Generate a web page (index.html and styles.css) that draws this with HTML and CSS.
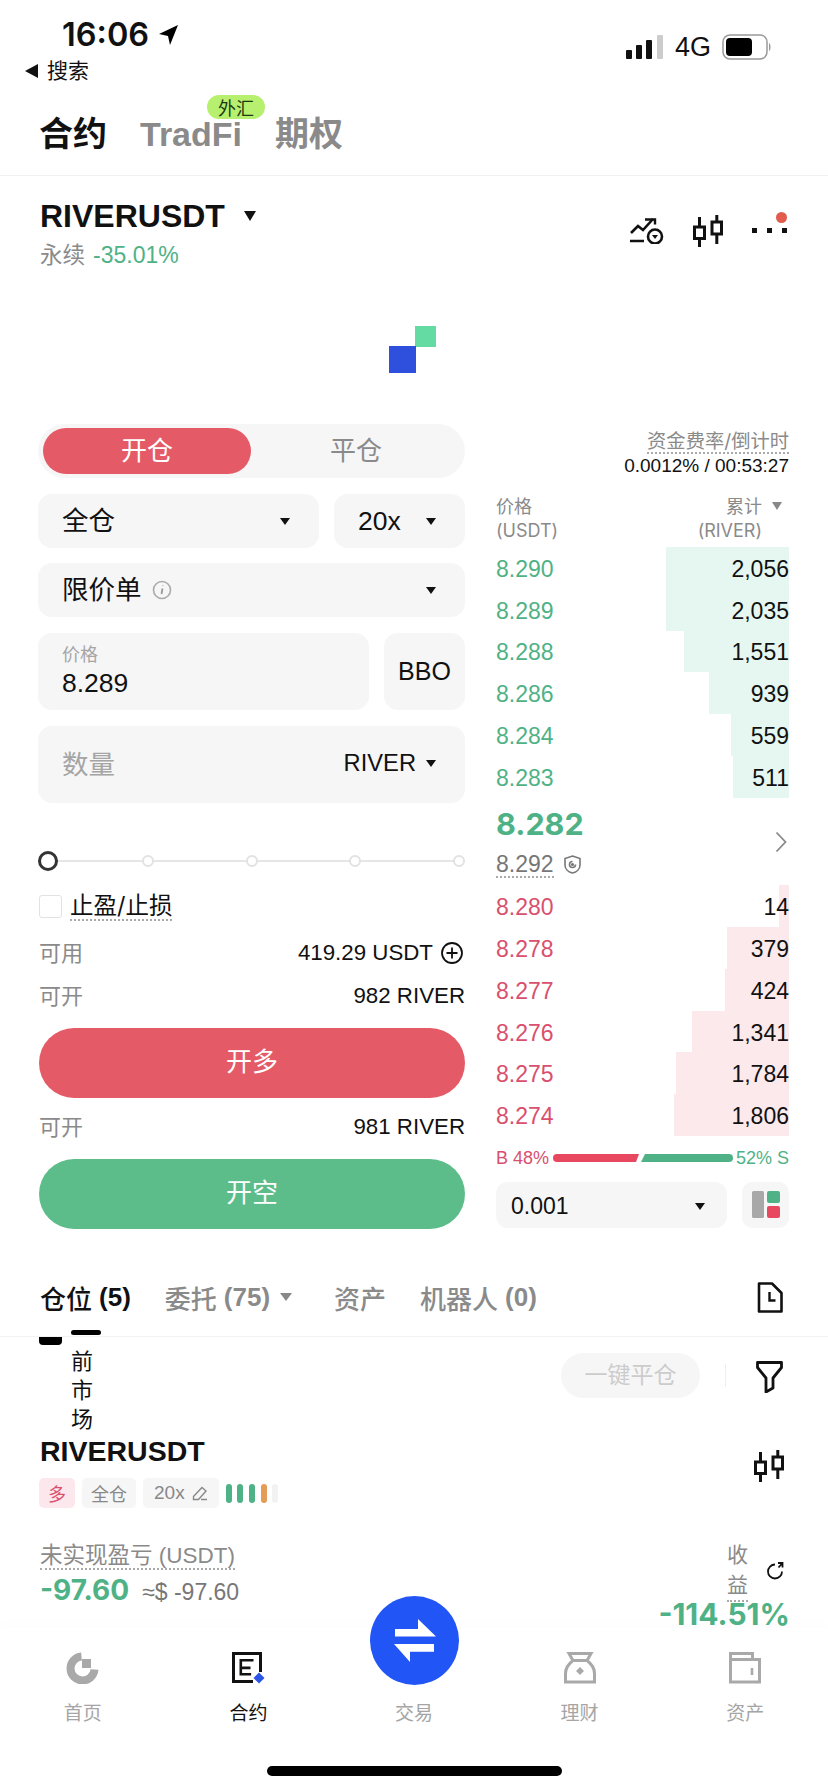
FILE: index.html
```html
<!DOCTYPE html>
<html lang="zh-CN">
<head>
	<meta charset="UTF-8">
	<title>合约</title>
	<link rel="stylesheet" href="styles.css">
</head>
<body>
<div class="phone">
	<div class="status">
		<div class="status-left">
			<div class="clock">16:06
				<svg class="loc" width="21" height="22" viewBox="0 0 21 22"><path d="M20 1 12 21l-2-9-9-2z" fill="#000"/></svg>
			</div>
			<div class="back"><span class="back-arrow"></span>搜索</div>
		</div>
		<div class="status-right">
			<svg width="38" height="24" viewBox="0 0 38 24"><rect x="0" y="15" width="6" height="9" rx="1" fill="#111"/><rect x="10" y="10" width="6" height="14" rx="1" fill="#111"/><rect x="20" y="5" width="6" height="19" rx="1" fill="#111"/><rect x="31" y="0" width="6" height="24" rx="1" fill="#ccc"/></svg>
			<span class="net">4G</span>
			<svg width="50" height="26" viewBox="0 0 50 26"><rect x="1" y="1" width="44" height="24" rx="7" fill="none" stroke="#999" stroke-width="1.5"/><rect x="4" y="4" width="26" height="18" rx="4" fill="#000"/><path d="M47 9c2 1 2 7 0 8z" fill="#999"/></svg>
		</div>
	</div>

	<div class="market-tabs">
		<span class="market-tab on">合约</span>
		<span class="market-tab tradfi">TradFi<span class="fx-badge">外汇</span></span>
		<span class="market-tab">期权</span>
	</div>

	<div class="ticker">
		<div>
			<div class="symbol">RIVERUSDT<i class="tri tri-lg"></i></div>
			<div class="sub"><span class="grey">永续</span><span class="green sub-chg">-35.01%</span></div>
		</div>
		<div class="ticker-icons">
			<svg width="34" height="26" viewBox="0 0 34 26" fill="none" stroke="#111" stroke-width="2.600"><path d="M0 23h14M1 15l7-7 5 4 10-11"/><path d="M15 1.500h10v5" stroke-width="2.400"/><circle cx="25" cy="18.500" r="7"/><path d="M22 17h6l-3 4z" fill="#111" stroke="none"/></svg>
			<svg class="candle" width="30" height="32" viewBox="0 0 30 32" fill="none" stroke="#111" stroke-width="3"><rect x="1.500" y="12" width="10" height="11.500"/><path d="M6.500 2v10M6.500 23.500V32"/><rect x="19" y="7" width="9.500" height="12"/><path d="M23.800 0v7M23.800 19v10"/></svg>
			<div class="more"><i></i><i></i><i></i><b class="red-dot"></b></div>
		</div>
	</div>

	<div class="chart-load">
		<div class="logo"><i class="logo-g"></i><i class="logo-b"></i></div>
	</div>

	<div class="trade">
		<div class="form">
			<div class="toggle"><span class="toggle-on">开仓</span><span class="toggle-off">平仓</span></div>
			<div class="row-2">
				<div class="field sel grow"><span class="up">全仓</span><i class="tri"></i></div>
				<div class="field sel lever"><span>20x</span><i class="tri"></i></div>
			</div>
			<div class="field sel order-field"><span class="order-type">限价单<svg width="20" height="20" viewBox="0 0 20 20"><circle cx="10" cy="10" r="8.500" fill="none" stroke="#aaa" stroke-width="1.600"/><path d="M10.500 8.500 9.500 14M10.800 5.600v.5" stroke="#999" stroke-width="1.800" fill="none"/></svg></span><i class="tri"></i></div>
			<div class="row-2">
				<div class="field price grow"><small>价格</small><span>8.289</span></div>
				<div class="field bbo">BBO</div>
			</div>
			<div class="field qty"><span class="ph up">数量</span><span class="unit">RIVER<i class="tri"></i></span></div>

			<div class="slider"><i class="knob"></i><i class="stop"></i><i class="stop"></i><i class="stop"></i><i class="stop"></i></div>

			<div class="tpsl"><i class="check"></i><span class="dotted">止盈/止损</span></div>
			<div class="kv kv-avail"><span class="up">可用</span><b>419.29 USDT<svg width="22" height="22" viewBox="0 0 22 22" fill="none" stroke="#111" stroke-width="1.800"><circle cx="11" cy="11" r="10"/><path d="M11 5.500v11M5.500 11h11"/></svg></b></div>
			<div class="kv"><span class="up">可开</span><b>982 RIVER</b></div>
			<div class="btn btn-red">开多</div>
			<div class="kv kv-2"><span class="up">可开</span><b>981 RIVER</b></div>
			<div class="btn btn-green">开空</div>
		</div>

		<div class="book">
			<div class="funding">
				<div class="dotted funding-t">资金费率/倒计时</div>
				<div class="funding-v">0.0012% / 00:53:27</div>
			</div>
			<div class="book-head">
				<div>价格<br>(USDT)</div>
				<div class="r">累计<i class="tri tri-grey"></i><br><span class="pr">(RIVER)</span></div>
			</div>
			<div class="book-row ask"><i class="depth" style="width:123px"></i><span>8.290</span><b>2,056</b></div>
			<div class="book-row ask"><i class="depth" style="width:123px"></i><span>8.289</span><b>2,035</b></div>
			<div class="book-row ask"><i class="depth" style="width:105px"></i><span>8.288</span><b>1,551</b></div>
			<div class="book-row ask"><i class="depth" style="width:80px"></i><span>8.286</span><b>939</b></div>
			<div class="book-row ask"><i class="depth" style="width:58px"></i><span>8.284</span><b>559</b></div>
			<div class="book-row ask"><i class="depth" style="width:56px"></i><span>8.283</span><b>511</b></div>
			<div class="mid">
				<div>
					<div class="last">8.282</div>
					<div class="mark"><span class="dotted">8.292</span><svg width="17" height="19" viewBox="0 0 17 19" fill="none" stroke="#777" stroke-width="1.600"><path d="M8.500 1 16 3.500V10c0 4-3.500 7-7.500 8C4.500 17 1 14 1 10V3.500z"/><path d="M11.500 9.500a3 3 0 1 1-3-3"/><circle cx="8.500" cy="9.500" r=".8" fill="#777"/></svg></div>
				</div>
				<svg width="12" height="22" viewBox="0 0 12 22" fill="none" stroke="#888" stroke-width="1.800"><path d="M1.500 1.500 10.500 11l-9 9.500"/></svg>
			</div>
			<div class="book-row bid"><i class="depth" style="width:10px"></i><span>8.280</span><b>14</b></div>
			<div class="book-row bid"><i class="depth" style="width:62px"></i><span>8.278</span><b>379</b></div>
			<div class="book-row bid"><i class="depth" style="width:64px"></i><span>8.277</span><b>424</b></div>
			<div class="book-row bid"><i class="depth" style="width:97px"></i><span>8.276</span><b>1,341</b></div>
			<div class="book-row bid"><i class="depth" style="width:113px"></i><span>8.275</span><b>1,784</b></div>
			<div class="book-row bid"><i class="depth" style="width:115px"></i><span>8.274</span><b>1,806</b></div>
			<div class="ratio">
				<span class="red-t">B 48%</span>
				<svg width="180" height="8" viewBox="0 0 180 8"><path d="M4 0H86L83 8H4a4 4 0 0 1 0-8z" fill="#e8485f"/><path d="M92 0H176a4 4 0 0 1 0 8H88z" fill="#4fb286"/></svg>
				<span class="green">52% S</span>
			</div>
			<div class="book-ctl">
				<div class="depth-sel"><span>0.001</span><i class="tri"></i></div>
				<div class="layout-btn">
					<svg width="28" height="27" viewBox="0 0 28 27"><rect x="0" y="0" width="12" height="27" rx="1.500" fill="#a8a8a8"/><rect x="15" y="0" width="13" height="12" rx="2" fill="#4fb286"/><rect x="15" y="15" width="13" height="12" rx="2" fill="#e8485f"/></svg>
				</div>
			</div>
		</div>
	</div>

	<div class="pos-tabs">
		<span class="pos-tab on">仓位 <b class="num">(5)</b></span>
		<span class="pos-tab has-tri">委托 <b class="num">(75)</b><i class="tri tri-grey"></i></span>
		<span class="pos-tab">资产</span>
		<span class="pos-tab">机器人 <b class="num">(0)</b></span>
		<svg class="pos-tab-icon" width="26" height="31" viewBox="0 0 26 31" fill="none" stroke="#111" stroke-width="2.600"><path d="M2 1.500h13l9.500 9.500v18.500H2z" stroke-linejoin="round"/><path d="M12.500 10v8.500h6" stroke-width="2.400"/></svg>
	</div>

	<div class="pos-body">
		<!-- checkbox row that got squashed under the tab bar -->
		<i class="clip-box"></i><i class="clip-bar"></i>
		<div class="pos-side">
			<svg width="27" height="32" viewBox="0 0 27 32" fill="none" stroke="#111" stroke-width="2.800" stroke-linejoin="round"><path d="M1.500 1.500h24v5L17 17v10l-7 4V17L1.500 6.500z"/></svg>
			<svg width="30" height="32" viewBox="0 0 30 32" fill="none" stroke="#111" stroke-width="3"><rect x="1.500" y="12" width="10" height="11.500"/><path d="M6.500 2v10M6.500 23.500V32"/><rect x="19" y="7" width="9.500" height="12"/><path d="M23.800 0v7M23.800 19v10"/></svg>
		</div>
		<div class="close-all"><span class="close-pill">一键平仓</span><i class="close-sep"></i></div>
		<div class="vert">前<br>市<br>场</div>
		<div class="pos-name">RIVERUSDT</div>
		<div class="tags">
			<span class="tag tag-red">多</span>
			<span class="tag">全仓</span>
			<span class="tag tag-lev">20x<svg width="16" height="16" viewBox="0 0 16 16" fill="none" stroke="#888" stroke-width="1.400"><path d="M1.500 11.500 10 2.500l4 3.500-7.500 8.500h-5zM9 14.500h6"/></svg></span>
			<span class="pills"><i></i><i></i><i></i><i class="o"></i><i class="e"></i></span>
		</div>
		<div class="pnl">
			<div>
				<div class="dotted pnl-t">未实现盈亏 (USDT)</div>
				<div class="pnl-v"><b class="green">-97.60</b><span>≈$ -97.60</span></div>
			</div>
			<div class="roe">
				<div class="roe-t"><span class="dotted">收<br>益</span><svg width="19" height="18" viewBox="0 0 19 18" fill="none" stroke="#111" stroke-width="1.800"><path d="M9 2.500A7 7 0 1 0 16 9.500"/><path d="M12 1h4.500v4.500M16.500 1 12.500 5.500"/></svg></div>
				<b class="green">-114.51%</b>
			</div>
		</div>
	</div>

	<div class="nav">
		<div class="nav-item">
			<svg width="34" height="32" viewBox="0 0 34 32"><path d="M15.500 4.500A12 12 0 1 0 28.500 17.500" fill="none" stroke="#a9a9a9" stroke-width="8"/><rect x="16" y="7" width="9" height="9" fill="#a9a9a9"/></svg>
			<span>首页</span>
		</div>
		<div class="nav-item on">
			<svg width="33" height="32" viewBox="0 0 33 32"><path d="M21 29.500H1.500V1.500h27V20" fill="none" stroke="#111" stroke-width="3"/><path d="M7.500 7h14v2.600h-11.400v5h8.400v2.600h-8.400V21h9v2.600h-11.600z" fill="#111"/><path d="M27 20.500l5.500 5.500-5.500 5.500-5.500-5.500z" fill="#2a55e5"/></svg>
			<span>合约</span>
		</div>
		<div class="nav-item">
			<i class="nav-gap"></i>
			<span>交易</span>
		</div>
		<div class="nav-item">
			<svg width="32" height="32" viewBox="0 0 32 32" fill="none" stroke="#a9a9a9" stroke-width="3"><path d="M5 1.500h22l-4 7c4 3 7.500 8 7.500 13v8.500h-29V21.500c0-5 3.500-10 7.500-13z"/><path d="M9.500 8.500h13"/><path d="M16 15l4 4-4 4-4-4z" fill="#a9a9a9" stroke="none"/></svg>
			<span>理财</span>
		</div>
		<div class="nav-item">
			<svg width="32" height="32" viewBox="0 0 32 32" fill="none" stroke="#a9a9a9" stroke-width="3"><path d="M1.500 30V1.500h22v6h7V30z"/><path d="M1.500 7.500h22"/><path d="M23 16v7" stroke-width="2.600"/></svg>
			<span>资产</span>
		</div>
	</div>
	<div class="swap">
		<svg width="42" height="43" viewBox="0 0 42 43" fill="#fff"><path d="M24 0 42 17.500H1V10H24zM0 25H40V32.700H16V43z"/></svg>
	</div>
	<div class="home-bar"></div>
</div>
</body>
</html>
```
FILE: styles.css
```css
*{
	box-sizing: border-box;
}
body{
	margin: 0;
	background: #fff;
	font-family: Inter, "Noto Sans CJK SC", sans-serif;
	color: #111;
}
i{
	display: block;
	font-style: normal;
}
b{
	font-weight: 400;
}
.phone{
	position: relative;
	width: 828px;
	height: 1792px;
	overflow: hidden;
}
.green{
	color: #4fb286;
}
.red-t{
	color: #d9506e;
}
.grey{
	color: #8a8a8a;
}
.dotted{
	border-bottom: 2px dotted #aaa;
}
/* noto cjk sits a bit low in the line */
.up{
	padding-bottom: 5px;
}
.tri{
	width: 0;
	height: 0;
	border-left: 5px solid transparent;
	border-right: 5px solid transparent;
	border-top: 7px solid #111;
}
.tri-lg{
	border-left-width: 6.500px;
	border-right-width: 6.500px;
	border-top-width: 10px;
}
.tri-grey{
	display: inline-block;
	border-top-color: #888;
	border-left-width: 5.500px;
	border-right-width: 5.500px;
	border-top-width: 8px;
	margin-left: 10px;
	vertical-align: 3px;
}

/* status bar */
.status{
	display: flex;
	justify-content: space-between;
	height: 92px;
	padding: 0 56px 0 25px;
}
.clock{
	display: flex;
	align-items: center;
	gap: 9px;
	padding: 17px 0 0 37px;
	height: 52px;
	font: 600 32.500px Inter, sans-serif;
}
.back{
	display: flex;
	align-items: center;
	gap: 9px;
	margin-top: 8px;
	font-size: 21px;
	line-height: 22px;
}
.back-arrow{
	border-top: 7px solid transparent;
	border-bottom: 7px solid transparent;
	border-right: 13px solid #111;
}
.status-right{
	display: flex;
	align-items: center;
	gap: 11px;
	height: 47px;
	padding-top: 47px;
}
.net{
	font: 27px "Liberation Sans", sans-serif;
}

/* market tabs */
.market-tabs{
	display: flex;
	gap: 33px;
	height: 84px;
	padding: 18px 39px 0;
	border-bottom: 1px solid #f0f0f0;
}
.market-tab{
	position: relative;
	font-size: 34px;
	line-height: 48px;
	font-weight: 700;
	color: #8a8a8a;
}
.market-tab.on{
	color: #111;
}
.tradfi{
	font-family: "Liberation Sans", sans-serif;
	font-size: 34px;
}
.fx-badge{
	position: absolute;
	left: 67px;
	top: -15px;
	width: 58px;
	height: 24px;
	border-radius: 12px;
	background: #b7ef6f;
	color: #1c3a10;
	font: 400 18px/24px "Noto Sans CJK SC", sans-serif;
	text-align: center;
}

/* ticker */
.ticker{
	display: flex;
	justify-content: space-between;
	padding: 22px 40px 0;
	height: 94px;
}
.symbol{
	display: flex;
	align-items: center;
	gap: 19px;
	font: 700 32px/36px "Liberation Sans", sans-serif;
}
.sub{
	display: flex;
	align-items: center;
	gap: 8px;
	margin-top: 8px;
	font-size: 22.500px;
	line-height: 26px;
}
.sub-chg{
	font: 23px/26px "Liberation Sans", sans-serif;
}
.ticker-icons{
	display: flex;
	align-items: flex-start;
	gap: 29px;
	padding-top: 20px;
}
.candle{
	margin-top: -3px;
}
.more{
	position: relative;
	display: flex;
	gap: 10px;
	width: 36px;
	padding-top: 10px;
}
.more i{
	width: 5px;
	height: 5px;
	background: #111;
}
.red-dot{
	position: absolute;
	right: 1px;
	top: -6px;
	width: 11px;
	height: 11px;
	border-radius: 50%;
	background: #e25c4e;
}
.chart-load{
	display: flex;
	justify-content: center;
	height: 154px;
	padding: 56px 3px 0 0;
}
.logo{
	position: relative;
	width: 47px;
	height: 47px;
}
.logo-g{
	position: absolute;
	right: 0;
	top: 0;
	width: 21px;
	height: 21px;
	background: #63dba3;
}
.logo-b{
	position: absolute;
	left: 0;
	bottom: 0;
	width: 27px;
	height: 27px;
	background: #2f50dc;
}

/* trade area */
.trade{
	display: flex;
	gap: 31px;
	padding-left: 38px;
}
.form{
	width: 427px;
}
.toggle{
	display: flex;
	align-items: center;
	height: 54px;
	padding: 0 4px 0 5px;
	border-radius: 27px;
	background: #f6f6f7;
	font-size: 26px;
}
.toggle-on{
	width: 208px;
	height: 46px;
	line-height: 46px;
	border-radius: 23px;
	background: #e55a67;
	color: #fff;
	text-align: center;
}
.toggle-off{
	flex: 1;
	height: 46px;
	line-height: 46px;
	text-align: center;
	color: #8a8a8a;
}
.field{
	height: 54px;
	margin-top: 16px;
	border-radius: 14px;
	background: #f6f6f7;
	font-size: 26.500px;
}
.order-field{
	margin-top: 15px;
}
.sel{
	display: flex;
	align-items: center;
	justify-content: space-between;
	padding: 0 29px 0 24px;
}
.row-2{
	display: flex;
	gap: 15px;
}
.grow{
	flex: 1;
}
.lever{
	width: 131px;
	padding: 0 29px 0 24px;
	font-family: "Liberation Sans", sans-serif;
}
.order-type{
	display: flex;
	align-items: center;
	gap: 10px;
	padding-bottom: 5px;
}
.order-type svg{
	margin-top: 5px;
}
.price{
	height: 77px;
	padding: 11px 24px 0;
}
.price small{
	display: block;
	font-size: 18px;
	line-height: 22px;
	color: #a5a5a5;
}
.price span{
	display: block;
	margin-top: 2px;
	font: 26.500px/30px "Liberation Sans", sans-serif;
}
.bbo{
	width: 81px;
	height: 77px;
	text-align: center;
	font: 25px/77px "Liberation Sans", sans-serif;
}
.qty{
	display: flex;
	align-items: center;
	justify-content: space-between;
	height: 77px;
	padding: 0 29px 0 24px;
}
.ph{
	color: #a5a5a5;
}
.unit{
	display: flex;
	align-items: center;
	gap: 10px;
	padding-bottom: 2px;
	font: 23.700px "Liberation Sans", sans-serif;
}
.slider{
	display: flex;
	align-items: center;
	justify-content: space-between;
	height: 20px;
	margin-top: 48px;
	background: linear-gradient(#e6e6e6,#e6e6e6) center/100% 2px no-repeat;
}
.knob{
	width: 20px;
	height: 20px;
	margin-right: -8px;
	border: 3px solid #333;
	border-radius: 50%;
	background: #fff;
}
.stop{
	width: 12px;
	height: 12px;
	border: 2px solid #e2e2e2;
	border-radius: 50%;
	background: #fff;
}
.tpsl{
	display: flex;
	align-items: center;
	gap: 8px;
	margin-top: 21px;
	font-size: 23.500px;
	line-height: 27px;
}
.check{
	width: 23px;
	height: 23px;
	margin-left: 1px;
	border: 1.500px solid #e2e2e2;
	border-radius: 3px;
}
.kv{
	display: flex;
	justify-content: space-between;
	align-items: center;
	height: 30px;
	margin-top: 13px;
	padding-left: 1px;
	font-size: 22px;
	color: #8a8a8a;
}
.kv b{
	display: flex;
	align-items: center;
	gap: 8px;
	color: #111;
	font: 22.300px "Liberation Sans", sans-serif;
}
.kv-avail{
	margin-top: 17px;
	padding-right: 2px;
}
.btn{
	height: 70px;
	margin: 17px 0 0 1px;
	border-radius: 35px;
	color: #fff;
	font-size: 26px;
	line-height: 68px;
	text-align: center;
}
.btn-red{
	background: #e55a67;
}
.btn-green{
	background: #5dbd8a;
}
.kv-2{
	margin-top: 14px;
}

/* order book */
.book{
	width: 294px;
	font-size: 21.500px;
}
.funding{
	height: 66px;
	padding: 3px 1px 0 0;
	text-align: right;
}
.funding-t{
	display: inline-block;
	color: #8a8a8a;
	font-size: 19.300px;
	line-height: 21px;
}
.funding-v{
	margin-top: 1px;
	font: 19px/22px "Liberation Sans", sans-serif;
}
.book-head{
	display: flex;
	justify-content: space-between;
	height: 57px;
	padding-top: 5px;
	font-size: 18px;
	line-height: 24px;
	color: #8a8a8a;
}
.book-head .r{
	text-align: right;
	padding-right: 8px;
}
.pr{
	padding-right: 20px;
}
.book-row{
	position: relative;
	display: flex;
	justify-content: space-between;
	align-items: center;
	height: 41.800px;
	padding: 3px 1px 0 0;
	font-family: "Liberation Sans", sans-serif;
	font-size: 23px;
}
.book-row span,
.book-row b{
	position: relative;
}
.depth{
	position: absolute;
	right: 1px;
	top: 0;
	bottom: 0;
}
.ask span{
	color: #4fb286;
}
.ask .depth{
	background: #e6f7f1;
}
.bid span{
	color: #d9506e;
}
.bid .depth{
	background: #fbe9ec;
}
.mid{
	display: flex;
	justify-content: space-between;
	align-items: center;
	height: 87.500px;
	padding-right: 3px;
}
.last{
	color: #4fb286;
	font: 700 30.500px/36px Inter, sans-serif;
}
.mark{
	display: flex;
	align-items: center;
	gap: 10px;
	margin-top: 10px;
	color: #777;
	font: 23px/24px "Liberation Sans", sans-serif;
}
.ratio{
	display: flex;
	justify-content: space-between;
	align-items: center;
	height: 20px;
	margin-top: 12px;
	padding-right: 1px;
	font: 18px "Liberation Sans", sans-serif;
}
.book-ctl{
	display: flex;
	justify-content: space-between;
	margin-top: 13.500px;
	padding-right: 1px;
}
.depth-sel{
	display: flex;
	align-items: center;
	justify-content: space-between;
	width: 231px;
	height: 46px;
	padding: 3px 22px 0 15px;
	border-radius: 12px;
	background: #f6f6f7;
	font: 23px "Liberation Sans", sans-serif;
}
.layout-btn{
	display: flex;
	align-items: center;
	justify-content: center;
	width: 47px;
	height: 46px;
	border-radius: 10px;
	background: #f6f6f7;
}

/* positions */
.pos-tabs{
	position: absolute;
	left: 0;
	right: 0;
	top: 1270px;
	display: flex;
	align-items: center;
	height: 67px;
	padding: 0 45px 12px 40px;
	border-bottom: 1px solid #f2f2f2;
	font-size: 26px;
}
.pos-tab{
	display: flex;
	align-items: center;
	gap: 7px;
	margin-right: 34px;
	color: #8a8a8a;
	font-weight: 500;
	white-space: nowrap;
}
.pos-tab.on{
	color: #111;
}
.has-tri{
	gap: 7px;
	margin-right: 42px;
}
.has-tri .tri{
	margin: 0 0 0 3px;
	border-left-width: 6.500px;
	border-right-width: 6.500px;
}
.num{
	font: 700 26px "Liberation Sans", sans-serif;
}
.pos-tab-icon{
	margin-left: auto;
}
.pos-body{
	position: absolute;
	left: 0;
	right: 0;
	top: 1337px;
	bottom: 0;
	padding: 0 38px 0 40px;
}
.clip-box{
	position: absolute;
	left: 39px;
	top: 0;
	width: 23px;
	height: 8px;
	border-radius: 0 0 4px 4px;
	background: #000;
}
.clip-bar{
	position: absolute;
	left: 71px;
	top: -7px;
	width: 30px;
	height: 5px;
	border-radius: 3px;
	background: #000;
}
.pos-side{
	position: absolute;
	right: 44px;
	top: 24px;
	display: flex;
	flex-direction: column;
	align-items: center;
	gap: 57px;
}
.close-all{
	position: absolute;
	left: 561px;
	top: 16px;
	display: flex;
	align-items: center;
	gap: 25px;
}
.close-pill{
	width: 139px;
	height: 45px;
	border-radius: 23px;
	background: #f6f6f7;
	color: #ccc;
	font-size: 23px;
	line-height: 45px;
	text-align: center;
}
.close-sep{
	width: 1px;
	height: 23px;
	background: #eee;
}
.vert{
	padding: 10px 0 0 31px;
	font-size: 22px;
	line-height: 29px;
}
.pos-name{
	font: 700 28.500px/34px "Liberation Sans", sans-serif;
}
.tags{
	display: flex;
	align-items: center;
	gap: 7px;
	margin: 10px 0 0 -1px;
}
.tag{
	display: flex;
	align-items: center;
	gap: 7px;
	height: 30px;
	padding: 0 9px;
	border-radius: 5px;
	background: #f6f6f7;
	color: #888;
	font-size: 18px;
}
.tag-lev{
	padding: 0 11px;
	font: 19px "Liberation Sans", sans-serif;
}
.tag-red{
	background: #fce8ec;
	color: #d9506e;
}
.pills{
	display: flex;
	gap: 5.700px;
}
.pills i{
	width: 6px;
	height: 19px;
	border-radius: 3px;
	background: #4fb286;
}
.pills .o{
	background: #e49b55;
}
.pills .e{
	background: #f2f2f2;
}
.pnl{
	display: flex;
	justify-content: space-between;
	margin-top: 36px;
}
.pnl-t{
	display: inline-block;
	color: #8a8a8a;
	font: 22.500px/24px "Liberation Sans", "Noto Sans CJK SC", sans-serif;
}
.pnl-v{
	display: flex;
	align-items: baseline;
	gap: 13px;
	margin-top: 6px;
	color: #777;
	font: 23px/28px "Liberation Sans", sans-serif;
}
.pnl-v b{
	font: 700 28px/28px Inter, sans-serif;
}
.roe{
	display: flex;
	flex-direction: column;
	align-items: flex-end;
	margin-top: -4px;
}
.roe-t{
	display: flex;
	align-items: center;
	gap: 18px;
	padding-right: 5px;
	color: #8a8a8a;
	font-size: 21px;
	line-height: 30px;
}
.roe b{
	margin-top: -2px;
	font: 700 30px/28px Inter, sans-serif;
}

/* bottom nav */
.nav{
	position: absolute;
	left: 0;
	right: 0;
	bottom: 0;
	display: flex;
	height: 164px;
	padding-top: 24px;
	background: #fff;
	box-shadow: 0 -6px 12px rgba(0,0,0,.012);
}
.nav-item{
	display: flex;
	flex-direction: column;
	align-items: center;
	width: 165.600px;
	color: #a5a5a5;
	font-size: 19px;
}
.nav-item svg,
.nav-gap{
	height: 32px;
}
.nav-item span{
	margin-top: 17px;
	line-height: 26px;
}
.nav-item.on{
	color: #111;
}
.swap{
	position: absolute;
	left: 370px;
	top: 1596px;
	display: flex;
	align-items: center;
	justify-content: center;
	width: 89px;
	height: 89px;
	border-radius: 50%;
	background: #2255f5;
}
.home-bar{
	position: absolute;
	left: 267px;
	top: 1766px;
	width: 295px;
	height: 10px;
	border-radius: 5px;
	background: #000;
}
```
